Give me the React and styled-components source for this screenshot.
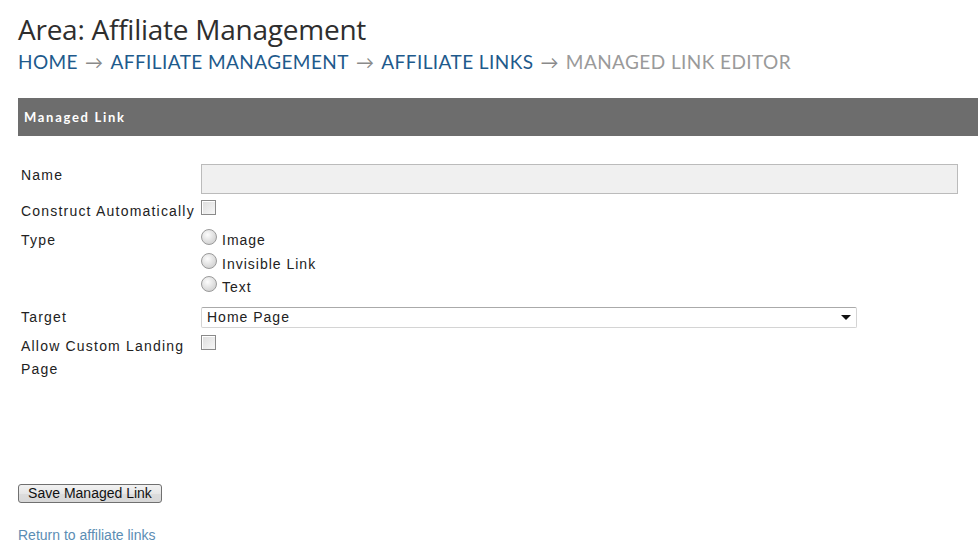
import React from "react";
import styled, { createGlobalStyle } from "styled-components";

const GlobalStyle = createGlobalStyle`
  body {
    margin: 0;
    background: #fff;
    font-family: "Liberation Sans", Arial, sans-serif;
  }
`;

const crumbs = [
  { label: "Home", href: "#" },
  { label: "Affiliate Management", href: "#" },
  { label: "Affiliate Links", href: "#" },
  { label: "Managed Link Editor" },
];

const linkTypes = ["Image", "Invisible Link", "Text"];

export default function App() {
  return (
    <Page>
      <GlobalStyle />
      <Title>Area: Affiliate Management</Title>
      <Breadcrumb>
        {crumbs.map((c, idx) => (
          <React.Fragment key={c.label}>
            {idx > 0 && <Arrow>→</Arrow>}
            {c.href ? <Crumb href={c.href}>{c.label}</Crumb> : <Current>{c.label}</Current>}
          </React.Fragment>
        ))}
      </Breadcrumb>

      <SectionBar>Managed Link</SectionBar>

      <FormGrid>
        <Label>Name</Label>
        <Field>
          <TextInput type="text" />
        </Field>

        <Label>Construct Automatically</Label>
        <Field>
          <Check type="checkbox" />
        </Field>

        <Label>Type</Label>
        <Field>
          {linkTypes.map((t) => (
            <RadioRow key={t}>
              <Radio type="radio" name="type" />
              <span>{t}</span>
            </RadioRow>
          ))}
        </Field>

        <Label>Target</Label>
        <Field>
          <SelectBox>
            <span>Home Page</span>
            <Caret />
          </SelectBox>
        </Field>

        <Label>Allow Custom Landing Page</Label>
        <Field>
          <Check type="checkbox" />
        </Field>
      </FormGrid>

      <Actions>
        <SaveButton type="button">Save Managed Link</SaveButton>
        <ReturnLink href="#">Return to affiliate links</ReturnLink>
      </Actions>
    </Page>
  );
}

const Page = styled.div`
  padding: 12px 0 0 18px;
`;

const Title = styled.h1`
  margin: 0;
  font-family: "Open Sans", sans-serif;
  font-weight: 400;
  font-size: 28px;
  line-height: 34px;
  letter-spacing: -0.25px;
  color: #2e2e2e;
`;

const Breadcrumb = styled.nav`
  display: flex;
  align-items: baseline;
  gap: 7px;
  margin-top: 3px;
  font-family: Lato, sans-serif;
  font-size: 19px;
  line-height: 26px;
  letter-spacing: 0.42px;
  text-transform: uppercase;
`;

const Crumb = styled.a`
  color: #1e5a8c;
  text-decoration: none;
`;

const Current = styled.span`
  color: #9a9a9a;
`;

const Arrow = styled.span`
  color: #8a8a8a;
  font-size: 18px;
`;

const SectionBar = styled.div`
  margin-top: 23px;
  height: 38px;
  display: flex;
  align-items: center;
  padding-left: 6px;
  background: #6d6d6d;
  color: #fff;
  font-family: Lato, sans-serif;
  font-weight: 700;
  font-size: 13px;
  letter-spacing: 1.7px;
`;

const FormGrid = styled.div`
  display: grid;
  grid-template-columns: 180px 1fr;
  row-gap: 6px;
  margin-top: 28px;
  padding: 0 20px 0 3px;
  font-size: 14px;
  line-height: 23px;
  letter-spacing: 1.2px;
  color: #222;
`;

const Label = styled.div`
  padding-right: 6px;
`;

const Field = styled.div`
  display: flex;
  flex-direction: column;
  align-items: flex-start;
`;

const TextInput = styled.input`
  box-sizing: border-box;
  width: 100%;
  height: 30px;
  margin: 0;
  border: 1px solid #bbb;
  background: #f0f0f0;
`;

const Check = styled.input`
  appearance: none;
  box-sizing: border-box;
  width: 15px;
  height: 15px;
  margin: 0;
  border: 1px solid #8a8a8a;
  background: linear-gradient(135deg, #dcdcdc, #f7f7f7);
  box-shadow: inset 1px 1px 0 #fff;
`;

const RadioRow = styled.label`
  display: flex;
  align-items: flex-start;
  gap: 5px;
  height: 23.5px;
  letter-spacing: 1px;
`;

const Radio = styled.input`
  appearance: none;
  box-sizing: border-box;
  width: 16px;
  height: 16px;
  margin: 0;
  border-radius: 50%;
  border: 1px solid #9a9a9a;
  background: radial-gradient(circle at 40% 35%, #fdfdfd, #d6d6d6 70%);
`;

const SelectBox = styled.div`
  box-sizing: border-box;
  position: relative;
  width: 656px;
  height: 21px;
  display: flex;
  align-items: center;
  margin-top: 1px;
  padding-left: 5px;
  border: 1px solid #d4d4d4;
  border-top-color: #aaa;
  border-radius: 2px;
  line-height: 19px;
  letter-spacing: 1px;
`;

const Caret = styled.span`
  position: absolute;
  right: 5px;
  top: 7px;
  width: 0;
  height: 0;
  border-left: 5px solid transparent;
  border-right: 5px solid transparent;
  border-top: 5px solid #111;
`;

const Actions = styled.div`
  display: flex;
  flex-direction: column;
  align-items: flex-start;
  margin-top: 103px;
`;

const SaveButton = styled.button`
  box-sizing: border-box;
  width: 144px;
  height: 19px;
  padding: 0;
  border: 1px solid #707070;
  border-radius: 3px;
  background: linear-gradient(#f2f2f2, #e6e6e6 50%, #dcdcdc 51%, #d8d8d8);
  font-family: "Liberation Sans", Arial, sans-serif;
  font-size: 14px;
  line-height: 17px;
  color: #111;
`;

const ReturnLink = styled.a`
  margin-top: 23px;
  font-size: 14px;
  line-height: 18px;
  color: #5b8db4;
  text-decoration: none;
`;
